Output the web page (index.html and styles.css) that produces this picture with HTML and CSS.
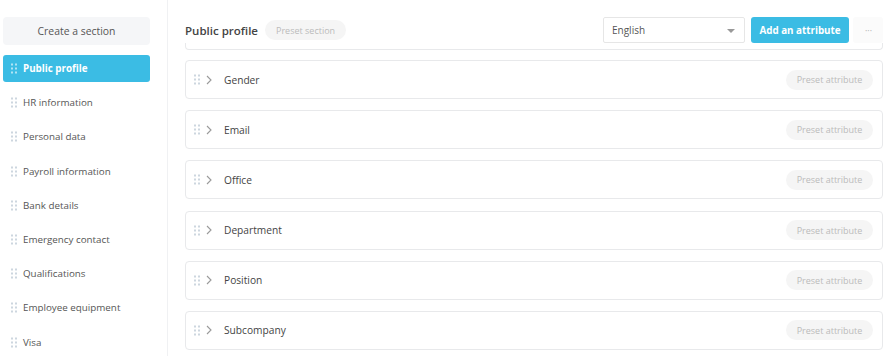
FILE: index.html
```html
<!DOCTYPE html>
<html lang="en">
  <head>
    <meta charset="UTF-8" />
    <meta name="viewport" content="width=device-width, initial-scale=1.0" />
    <title>Profile sections</title>
    <link rel="stylesheet" href="styles.css">
  </head>
  <body>
    <div class="layout">
      <aside class="sidebar">
        <button class="create-btn">Create a section</button>
        <ul class="sections">
          <li class="section active"><span class="dots"></span>Public profile</li>
          <li class="section"><span class="dots"></span>HR information</li>
          <li class="section"><span class="dots"></span>Personal data</li>
          <li class="section"><span class="dots"></span>Payroll information</li>
          <li class="section"><span class="dots"></span>Bank details</li>
          <li class="section"><span class="dots"></span>Emergency contact</li>
          <li class="section"><span class="dots"></span>Qualifications</li>
          <li class="section"><span class="dots"></span>Employee equipment</li>
          <li class="section"><span class="dots"></span>Visa</li>
        </ul>
      </aside>

      <main class="content">
        <div class="header">
          <h2>Public profile</h2>
          <span class="pill">Preset section</span>
          <div class="actions">
            <div class="select">
              English
              <span class="caret"></span>
            </div>
            <button class="btn">Add an attribute</button>
            <button class="more">&middot;&middot;&middot;</button>
          </div>
        </div>
        <div class="card-tail"></div>

        <div class="attributes" id="attributes"></div>
      </main>
    </div>
    <script>
      const attributes = ["Gender", "Email", "Office", "Department", "Position", "Subcompany"];
      const list = document.getElementById("attributes");

      // Build one card per attribute
      attributes.forEach((name) => {
        const card = document.createElement("div");
        card.className = "card";
        card.innerHTML = `
          <span class="dots"></span>
          <svg class="chevron" width="6" height="10" viewBox="0 0 6 10">
            <path d="M1 1l4 4-4 4" fill="none" stroke="#9a9a9a" stroke-width="1.1" />
          </svg>
          <span class="name">${name}</span>
          <span class="pill">Preset attribute</span>
        `;
        list.appendChild(card);
      });
    </script>
  </body>
</html>
```

FILE: styles.css
```css
body {
  font-family: "Open Sans", Arial, sans-serif;
  background-color: #fff;
  color: #444;
  margin: 0;
  padding: 0;
}
.layout {
  display: grid;
  grid-template-columns: 168px 1fr;
  height: 356px;
  overflow: hidden;
}
.sidebar {
  border-right: 1px solid #f0f1f3;
  padding: 17px 17px 0 3px;
}
.create-btn {
  display: block;
  width: 100%;
  height: 28px;
  background: #f5f6f8;
  border: none;
  border-radius: 4px;
  font-family: inherit;
  font-size: 10.4px;
  color: #555;
}
.sections {
  list-style: none;
  margin: 10px 0 0;
  padding: 0;
}
.section {
  display: flex;
  align-items: center;
  height: 27px;
  margin-bottom: 7.2px;
  padding-left: 8px;
  border-radius: 3px;
  font-size: 9.8px;
  color: #555;
}
.section.active {
  background-color: #3bbce4;
  color: #fff;
  font-weight: 700;
}
.dots {
  display: inline-block;
  flex-shrink: 0;
  width: 6px;
  height: 11px;
  margin-right: 6px;
  background-image: radial-gradient(circle, #cdd6df 0.9px, transparent 1.2px);
  background-size: 4px 4px;
  background-position: -1px -0.5px;
}
.section.active .dots {
  background-image: radial-gradient(circle, rgba(255, 255, 255, 0.6) 0.9px, transparent 1.2px);
}
.content {
  padding: 17px 7px 0 17px;
}
.header {
  display: flex;
  align-items: center;
  height: 26px;
}
.header h2 {
  margin: 0 7px 0 0;
  font-size: 11.5px;
  font-weight: 600;
  color: #444;
}
.pill {
  display: inline-flex;
  align-items: center;
  height: 20px;
  padding: 0 11px;
  border-radius: 10px;
  background: #f5f5f5;
  color: #bbb;
  font-size: 9px;
}
.actions {
  display: flex;
  margin-left: auto;
  height: 26px;
}
.select {
  position: relative;
  display: flex;
  align-items: center;
  box-sizing: border-box;
  width: 142px;
  padding-left: 8px;
  border: 1px solid #e6e6e6;
  border-radius: 2px;
  font-size: 10px;
  color: #555;
}
.caret {
  position: absolute;
  right: 9px;
  top: 11px;
  border-left: 4px solid transparent;
  border-right: 4px solid transparent;
  border-top: 4px solid #999;
}
.btn {
  width: 98px;
  margin-left: 6px;
  padding: 0;
  white-space: nowrap;
  background-color: #3bbce4;
  color: #fff;
  border: none;
  border-radius: 3px;
  font-family: inherit;
  font-size: 9.8px;
  font-weight: 700;
}
.more {
  width: 30px;
  margin-left: 4px;
  padding: 0;
  background: #fbfbfb;
  border: none;
  border-radius: 3px;
  color: #bbb;
  font-size: 10px;
  letter-spacing: -1px;
}
.card-tail {
  height: 6px;
  border: 1px solid #e8e9eb;
  border-top: none;
  border-radius: 0 0 4px 4px;
}
.attributes {
  padding-top: 10px;
}
.card {
  display: flex;
  align-items: center;
  box-sizing: border-box;
  height: 39px;
  margin-bottom: 11.2px;
  padding: 0 9px 0 8px;
  border: 1px solid #e8e9eb;
  border-radius: 4px;
}
.card .dots {
  margin-right: 6px;
}
.chevron {
  margin-right: 12px;
}
.name {
  font-size: 10.2px;
  color: #444;
}
.card .pill {
  margin-left: auto;
  width: 87px;
  box-sizing: border-box;
  justify-content: center;
  padding: 0;
}
```
